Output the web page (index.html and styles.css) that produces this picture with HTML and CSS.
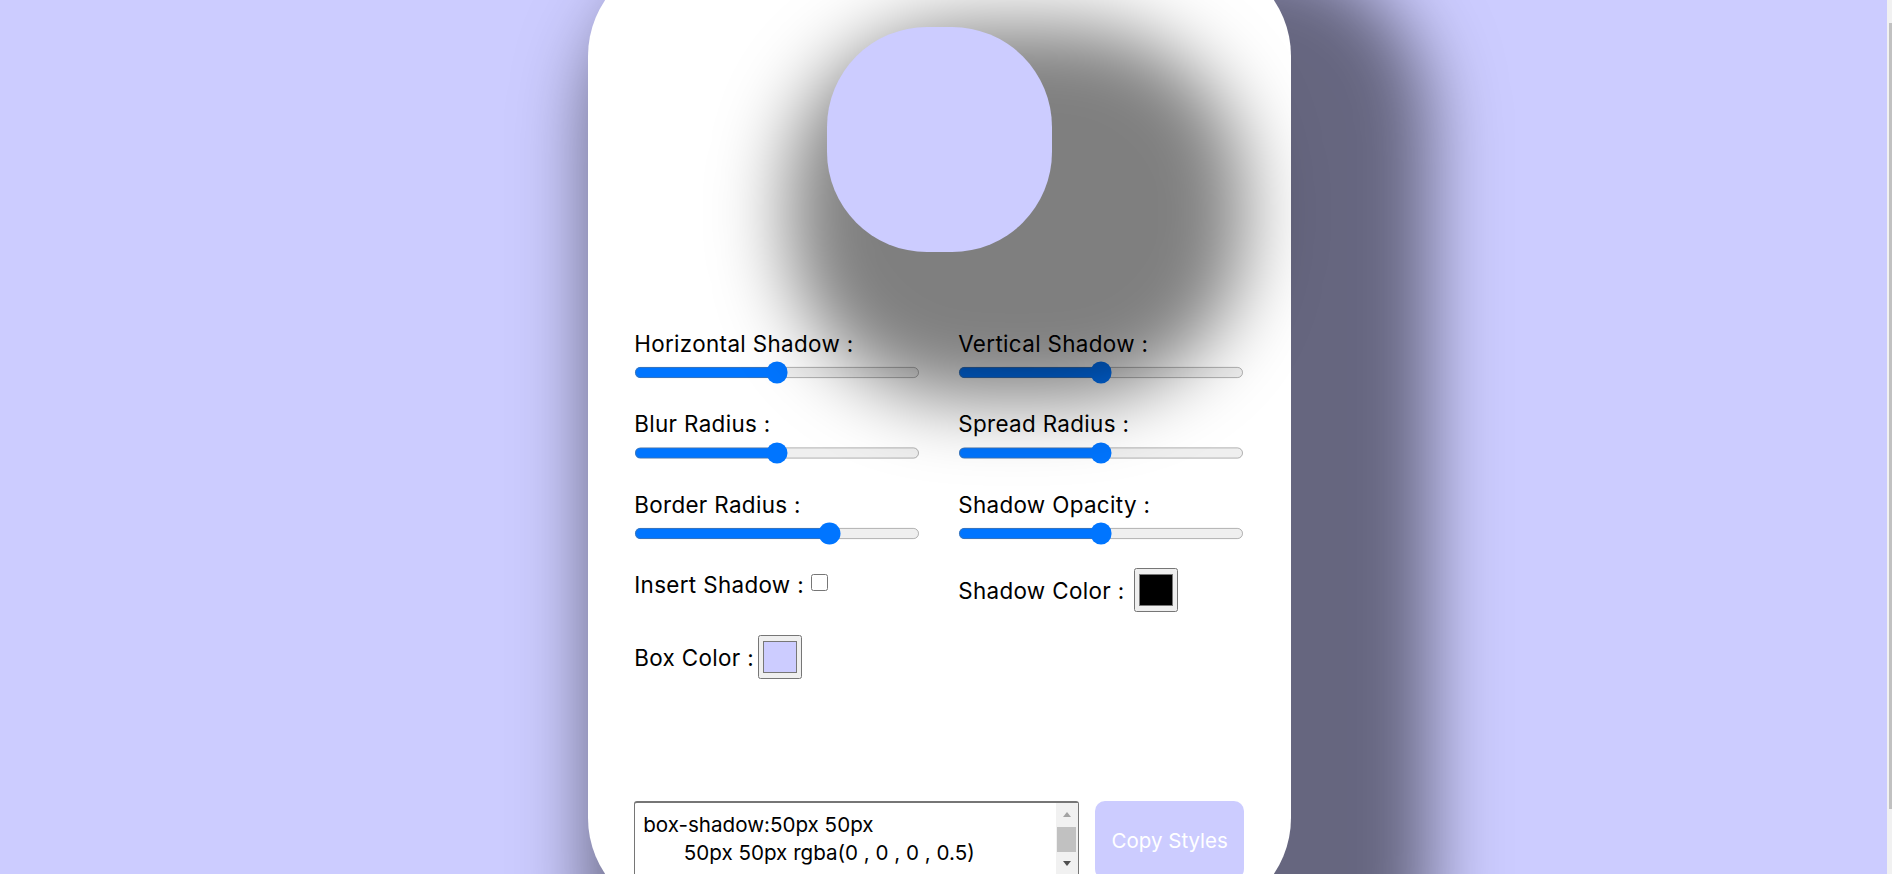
FILE: index.html
```html
<!DOCTYPE html>
<html lang="en">
<head>
<meta charset="utf-8">
<title>Box Shadow Generator</title>
<link rel="stylesheet" href="styles.css">
</head>
<body>
<main class="card">
  <div class="preview-wrap">
    <div class="preview-shadow"></div>
    <div class="preview"></div>
  </div>

  <div class="controls">
    <div class="field">
      <label class="label" for="hs">Horizontal Shadow :</label>
      <input class="range" type="range" id="hs" min="0" max="100" value="50">
    </div>
    <div class="field">
      <label class="label" for="vs">Vertical Shadow :</label>
      <input class="range" type="range" id="vs" min="0" max="100" value="50">
    </div>
    <div class="field">
      <label class="label" for="br">Blur Radius :</label>
      <input class="range" type="range" id="br" min="0" max="100" value="50">
    </div>
    <div class="field">
      <label class="label" for="sr">Spread Radius :</label>
      <input class="range" type="range" id="sr" min="0" max="100" value="50">
    </div>
    <div class="field">
      <label class="label" for="bd">Border Radius :</label>
      <input class="range" type="range" id="bd" min="0" max="100" value="70">
    </div>
    <div class="field">
      <label class="label" for="so">Shadow Opacity :</label>
      <input class="range" type="range" id="so" min="0" max="1" step="0.1" value="0.5">
    </div>
    <div class="field field--inline">
      <label class="label" for="ins">Insert Shadow :</label>
      <input class="check" type="checkbox" id="ins">
    </div>
    <div class="field field--inline">
      <label class="label" for="sc">Shadow Color :</label>
      <input class="swatch" type="color" id="sc" value="#000000">
    </div>
    <div class="field field--inline field--last">
      <label class="label" for="bc">Box Color :</label>
      <input class="swatch swatch--tight" type="color" id="bc" value="#ccccff">
    </div>
  </div>

  <div class="output">
    <div class="code-wrap">
      <textarea class="code" readonly>box-shadow:50px 50px
       50px 50px rgba(0 , 0 , 0 , 0.5)</textarea>
      <div class="fake-scroll" aria-hidden="true">
        <span class="arrow arrow--up"></span>
        <span class="thumb"></span>
        <span class="arrow arrow--down"></span>
      </div>
    </div>
    <button class="copy" type="button">Copy Styles</button>
  </div>
</main>
<div class="page-scroll" aria-hidden="true"><span class="page-thumb"></span></div>
</body>
</html>
```

FILE: styles.css
```css
* {
  box-sizing: border-box;
}

html,
body {
  margin: 0;
}

body {
  height: 100vh;
  display: flex;
  justify-content: center;
  align-items: center;
  padding-right: 12.6px;
  background: #ccccff;
  font-family: Inter, "Open Sans", "Liberation Sans", sans-serif;
  color: #000;
}

/* window scrollbar strip at the right edge */
.page-scroll {
  position: fixed;
  top: 0;
  right: 0;
  width: 5px;
  height: 100vh;
  background: #f1f1f1;
}

.page-thumb {
  position: absolute;
  top: 23px;
  left: 2px;
  right: 0;
  height: 786px;
  background: #c1c1c1;
}

.card {
  flex-shrink: 0;
  width: 703px;
  height: 962px;
  padding: 71px 47px 39px 46px;
  display: flex;
  flex-direction: column;
  background: #ffffff;
  border-radius: 100px;
  box-shadow: 70px 70px 70px 70px rgba(0, 0, 0, 0.5);
}

.preview-wrap {
  position: relative;
  flex-shrink: 0;
  align-self: center;
  width: 225px;
  height: 225px;
}

.preview-shadow {
  position: absolute;
  left: -38px;
  top: -2px;
  width: 456px;
  height: 375px;
  border-radius: 180px / 168px;
  background: rgba(0, 0, 0, 0.5);
  filter: blur(38px);
}

.preview {
  position: relative;
  width: 225px;
  height: 225px;
  border-radius: 100px;
  background: #ccccff;
}

.controls {
  margin-top: 75px;
  display: grid;
  grid-template-columns: 1fr 1fr;
  column-gap: 38px;
  row-gap: 21px;
  align-items: start;
}

.field {
  display: flex;
  flex-direction: column;
  align-items: flex-start;
}

.field--inline {
  flex-direction: row;
  align-items: center;
}

.field--last {
  margin-top: 2px;
}

.label {
  font-size: 22.4px;
  line-height: 33.6px;
  letter-spacing: 0.35px;
  white-space: nowrap;
}

.range {
  zoom: 1.4;
  width: 204px;
  margin: 0.5px 0 2px 0;
}

.check {
  width: 17px;
  height: 17px;
  margin: 0 0 5px 7px;
}

.swatch {
  width: 44px;
  height: 44px;
  margin: 0 0 0 10px;
}

.swatch--tight {
  margin-left: 4px;
}

.output {
  margin-top: auto;
  display: flex;
  gap: 16px;
  height: 78px;
}

.code-wrap {
  position: relative;
  flex: 1;
}

.code {
  display: block;
  width: 100%;
  height: 100%;
  margin: 0;
  padding: 8px 30px 0 8px;
  border: 1px solid #767676;
  border-top-width: 2px;
  border-radius: 3px;
  resize: none;
  overflow: hidden;
  white-space: pre;
  font-family: Inter, "Open Sans", "Liberation Sans", sans-serif;
  font-size: 20.6px;
  line-height: 28.3px;
  color: #000;
  background: #fff;
}

.fake-scroll {
  position: absolute;
  top: 2px;
  right: 1px;
  bottom: 1px;
  width: 22px;
  background: #f1f1f1;
}

.arrow {
  position: absolute;
  left: 7px;
  width: 0;
  height: 0;
  border-left: 4px solid transparent;
  border-right: 4px solid transparent;
}

.arrow--up {
  top: 9px;
  border-bottom: 5px solid #a3a3a3;
}

.arrow--down {
  bottom: 12px;
  border-top: 5px solid #505050;
}

.thumb {
  position: absolute;
  top: 24px;
  left: 1px;
  right: 2px;
  height: 25px;
  background: #c1c1c1;
}

.copy {
  width: 149px;
  height: 100%;
  padding: 0;
  border: none;
  border-radius: 10px;
  background: #ccccff;
  color: #ffffff;
  font-family: Inter, "Open Sans", "Liberation Sans", sans-serif;
  font-size: 20.5px;
}
```
